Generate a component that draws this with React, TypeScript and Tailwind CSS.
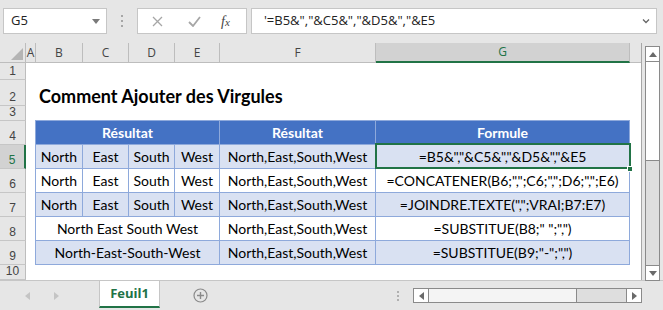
import React from 'react';

const FONT = { fontFamily: 'Lato, "Liberation Sans", sans-serif' };
const UI = { fontFamily: '"Open Sans", "Liberation Sans", sans-serif' };
const ROWNUM = { fontFamily: '"Liberation Sans", Arial, sans-serif' };

const colHeads: { label: string; w: string; sel?: boolean }[] = [
  { label: 'A', w: 'w-[10px]' },
  { label: 'B', w: 'w-[47px]' },
  { label: 'C', w: 'w-[46px]' },
  { label: 'D', w: 'w-[46px]' },
  { label: 'E', w: 'w-[45px]' },
  { label: 'F', w: 'w-[156px]' },
  { label: 'G', w: 'w-[254px]', sel: true },
];

const rowHeads: { label: string; h: string; sel?: boolean }[] = [
  { label: '1', h: 'h-[17px]' },
  { label: '2', h: 'h-[26px]' },
  { label: '3', h: 'h-[15px]' },
  { label: '4', h: 'h-[24px]' },
  { label: '5', h: 'h-[24px]', sel: true },
  { label: '6', h: 'h-[24px]' },
  { label: '7', h: 'h-[24px]' },
  { label: '8', h: 'h-[24px]' },
  { label: '9', h: 'h-[24px]' },
  { label: '10', h: 'h-[15px]' },
];

const rows = [
  { split: true, shade: true, merged: '', res: 'North,East,South,West', formula: '=B5&","&C5&","&D5&","&E5' },
  { split: true, shade: false, merged: '', res: 'North,East,South,West', formula: '=CONCATENER(B6;",";C6;",";D6;",";E6)' },
  { split: true, shade: true, merged: '', res: 'North,East,South,West', formula: '=JOINDRE.TEXTE(",";VRAI;B7:E7)' },
  { split: false, shade: false, merged: 'North East South West', res: 'North,East,South,West', formula: '=SUBSTITUE(B8;" ";",")' },
  { split: false, shade: true, merged: 'North-East-South-West', res: 'North,East,South,West', formula: '=SUBSTITUE(B9;"-";",")' },
];

function Cell({ children, shade, className = '' }: { children?: React.ReactNode; shade: boolean; className?: string }) {
  return (
    <div
      className={`flex items-center justify-center h-[23px] text-[14px] text-black whitespace-nowrap overflow-hidden ${
        shade ? 'bg-[#d9e1f2]' : 'bg-white'
      } ${className}`}
    >
      {children}
    </div>
  );
}

function FormulaBar() {
  return (
    <div className="h-[43px] bg-[#e6e6e6] flex items-start pt-[8px] pl-[3px] pr-[6px]" style={UI}>
      <div className="w-[104px] h-[26px] bg-white border border-[#c6c6c6] flex items-center pl-[7px] pr-[6px] text-[13px] text-[#222]">
        <span className="flex-1">G5</span>
        <svg width="8" height="5" viewBox="0 0 8 5">
          <path d="M0 0h8L4 5z" fill="#7a7a7a" />
        </svg>
      </div>
      <div className="w-[30px] h-[26px] flex flex-col items-center justify-center gap-[3px]">
        <span className="w-[2px] h-[2px] bg-[#a6a6a6]" />
        <span className="w-[2px] h-[2px] bg-[#a6a6a6]" />
        <span className="w-[2px] h-[2px] bg-[#a6a6a6]" />
      </div>
      <div className="w-[110px] h-[26px] bg-white border border-[#c6c6c6] flex items-center">
        <svg className="ml-[14px]" width="11" height="11" viewBox="0 0 11 11">
          <path d="M1 1l9 9M10 1l-9 9" stroke="#a6a6a6" strokeWidth="1.3" />
        </svg>
        <svg className="ml-[25px]" width="13" height="11" viewBox="0 0 13 11">
          <path d="M1 6l4 4L12 1" stroke="#a6a6a6" strokeWidth="1.8" fill="none" />
        </svg>
        <span
          className="ml-[20px] text-[14px] italic text-[#444]"
          style={{ fontFamily: '"Liberation Serif", serif' }}
        >
          f<span className="text-[11px]">x</span>
        </span>
      </div>
      <div className="ml-[4px] flex-1 h-[26px] bg-white border border-[#c6c6c6] flex items-center pl-[12px] pr-[6px] text-[13px] text-[#222]">
        <span className="flex-1">'=B5&amp;","&amp;C5&amp;","&amp;D5&amp;","&amp;E5</span>
        <svg width="8" height="5" viewBox="0 0 8 5">
          <path d="M1 0.5l3 3 3-3" stroke="#666" strokeWidth="1.3" fill="none" />
        </svg>
      </div>
    </div>
  );
}

function Sheet() {
  return (
    <div className="flex h-[237px]" style={UI}>
      <div className="w-[641px] flex flex-col bg-white">
        {/* column headers */}
        <div className="flex h-[20px] bg-[#e6e6e6] text-[12px] text-[#444]">
          <div className="w-[26px] h-full border-r border-b border-[#bdbdbd] flex items-end justify-end pr-[2px] pb-[2px]">
            <svg width="12" height="12" viewBox="0 0 12 12">
              <path d="M12 0v12H0z" fill="#b4b4b4" />
            </svg>
          </div>
          {colHeads.map((c) => (
            <div
              key={c.label}
              className={`${c.w} h-full flex items-center justify-center border-r border-[#bdbdbd] ${
                c.sel ? 'bg-[#d2d2d2] border-b-2 border-b-[#217346] text-[#217346]' : 'border-b'
              }`}
            >
              {c.label}
            </div>
          ))}
          <div className="flex-1 h-full border-b border-[#bdbdbd]" />
        </div>
        {/* body */}
        <div className="flex flex-1">
          <div className="w-[26px] flex flex-col bg-[#e6e6e6] text-[12px] text-[#444]" style={ROWNUM}>
            {rowHeads.map((r) => (
              <div
                key={r.label}
                className={`${r.h} flex items-end justify-center border-b border-[#c6c6c6] ${
                  r.sel ? 'bg-[#d2d2d2] border-r-2 border-r-[#217346] text-[#217346]' : 'border-r border-r-[#bdbdbd]'
                }`}
              >
                <span className="block leading-[13px] mb-[1px]">{r.label}</span>
              </div>
            ))}
          </div>
          <div className="flex-1 flex flex-col" style={FONT}>
            <div className="h-[57px] pl-[13px] pt-[24px]">
              <h1 className="text-[18px] font-bold text-black leading-none">Comment Ajouter des Virgules</h1>
            </div>
            <div className="relative ml-[9px] w-[595px]">
              <div className="grid grid-cols-[46px_45px_45px_44px_155px_253px] gap-px bg-[#8ea9db] border border-[#8ea9db]">
                <div className="col-span-4 h-[23px] bg-[#4472c4] text-white font-bold text-[14px] flex items-center justify-center">
                  Résultat
                </div>
                <div className="h-[23px] bg-[#4472c4] text-white font-bold text-[14px] flex items-center justify-center">
                  Résultat
                </div>
                <div className="h-[23px] bg-[#4472c4] text-white font-bold text-[14px] flex items-center justify-center">
                  Formule
                </div>
                {rows.map((r, i) => (
                  <React.Fragment key={i}>
                    {r.split ? (
                      ['North', 'East', 'South', 'West'].map((d) => (
                        <Cell key={d} shade={r.shade}>
                          {d}
                        </Cell>
                      ))
                    ) : (
                      <Cell shade={r.shade} className="col-span-4">
                        {r.merged}
                      </Cell>
                    )}
                    <Cell shade={r.shade}>{r.res}</Cell>
                    <Cell shade={r.shade}>{r.formula}</Cell>
                  </React.Fragment>
                ))}
              </div>
              {/* active cell G5 */}
              <div className="absolute left-[340px] top-[23px] w-[256px] h-[26px] border-2 border-[#217346] pointer-events-none" />
              <div className="absolute left-[592px] top-[46px] w-[6px] h-[6px] bg-[#217346] border border-white" />
            </div>
          </div>
        </div>
      </div>
      {/* vertical scrollbar */}
      <div className="w-[22px] bg-[#e6e6e6] border-l border-[#a6a6a6] pl-[3px] pt-[3px]">
        <div className="w-[15px] h-[235px] border border-[#8a8a8a] bg-[#dedede] flex flex-col justify-between">
          <div className="h-[15px] bg-white border-b border-[#8a8a8a] flex items-center justify-center">
            <svg width="8" height="5" viewBox="0 0 8 5">
              <path d="M0 5h8L4 0z" fill="#6a6a6a" />
            </svg>
          </div>
          <div className="flex-1 flex flex-col">
            <div className="h-[99px] bg-white border-b border-[#8a8a8a]" />
          </div>
          <div className="h-[15px] bg-white border-t border-[#8a8a8a] flex items-center justify-center">
            <svg width="8" height="5" viewBox="0 0 8 5">
              <path d="M0 0h8L4 5z" fill="#6a6a6a" />
            </svg>
          </div>
        </div>
      </div>
    </div>
  );
}

function TabBar() {
  return (
    <div className="h-[30px] bg-[#e6e6e6] border-t border-[#c6c6c6] flex items-start" style={UI}>
      <div className="w-[99px] h-full flex items-center">
        <svg className="ml-[25px]" width="5" height="8" viewBox="0 0 5 8">
          <path d="M5 0v8L0 4z" fill="#c4c4c4" />
        </svg>
        <svg className="ml-[24px]" width="5" height="8" viewBox="0 0 5 8">
          <path d="M0 0v8l5-4z" fill="#c4c4c4" />
        </svg>
      </div>
      <div className="w-[61px] h-[27px] bg-white border-x border-[#c6c6c6] border-b-2 border-b-[#217346] flex items-center justify-center text-[13px] font-bold text-[#217346]">
        Feuil1
      </div>
      <div className="w-[84px] h-full flex items-center pl-[33px]">
        <svg width="15" height="15" viewBox="0 0 15 15">
          <circle cx="7.5" cy="7.5" r="6.5" stroke="#8a8a8a" strokeWidth="1.2" fill="none" />
          <path d="M7.5 4v7M4 7.5h7" stroke="#8a8a8a" strokeWidth="1.4" />
        </svg>
      </div>
      <div className="flex-1" />
      <div className="h-full flex items-center gap-[14px] pr-[21px]">
        <div className="flex flex-col gap-[2px]">
          <span className="w-[2px] h-[2px] bg-[#b0b0b0]" />
          <span className="w-[2px] h-[2px] bg-[#b0b0b0]" />
          <span className="w-[2px] h-[2px] bg-[#b0b0b0]" />
        </div>
        <div className="w-[229px] h-[15px] border border-[#8a8a8a] bg-[#dedede] flex">
          <div className="w-[15px] h-full bg-white border-r border-[#8a8a8a] flex items-center justify-center">
            <svg width="5" height="8" viewBox="0 0 5 8">
              <path d="M5 0v8L0 4z" fill="#6a6a6a" />
            </svg>
          </div>
          <div className="w-[148px] h-full bg-[#f4f4f4] border-r border-[#8a8a8a]" />
          <div className="flex-1" />
          <div className="w-[15px] h-full bg-white border-l border-[#8a8a8a] flex items-center justify-center">
            <svg width="5" height="8" viewBox="0 0 5 8">
              <path d="M0 0v8l5-4z" fill="#6a6a6a" />
            </svg>
          </div>
        </div>
      </div>
    </div>
  );
}

export default function App() {
  return (
    <div className="w-[663px] h-[310px] overflow-hidden bg-[#e6e6e6]">
      <FormulaBar />
      <Sheet />
      <TabBar />
    </div>
  );
}
